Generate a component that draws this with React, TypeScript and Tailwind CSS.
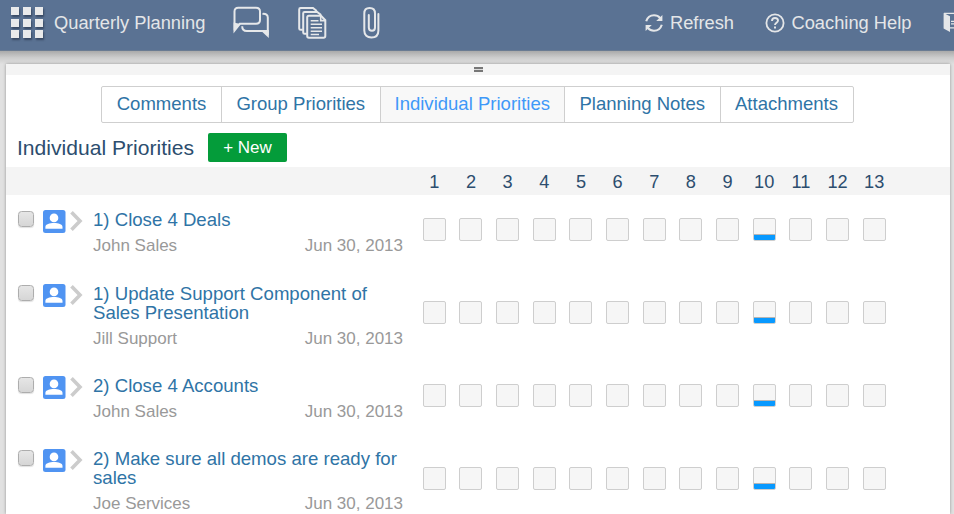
import React from "react";

type Priority = { title: string; owner: string; due: string };

const priorities: Priority[] = [
  { title: "1) Close 4 Deals", owner: "John Sales", due: "Jun 30, 2013" },
  { title: "1) Update Support Component of Sales Presentation", owner: "Jill Support", due: "Jun 30, 2013" },
  { title: "2) Close 4 Accounts", owner: "John Sales", due: "Jun 30, 2013" },
  { title: "2) Make sure all demos are ready for sales", owner: "Joe Services", due: "Jun 30, 2013" },
];

const weeks = Array.from({ length: 13 }, (_, i) => i + 1);
const currentWeek = 10;

const tabs = [
  { label: "Comments", width: "w-[120px]" },
  { label: "Group Priorities", width: "w-[158.5px]" },
  { label: "Individual Priorities", width: "w-[184.5px]" },
  { label: "Planning Notes", width: "w-[155.5px]" },
  { label: "Attachments", width: "w-[132px]" },
];
const activeTab = "Individual Priorities";

function AppGrid() {
  return (
    <div className="ml-[11px] grid w-[32px] grid-cols-3 gap-x-[4px] gap-y-[3.5px]">
      {Array.from({ length: 9 }, (_, i) => (
        <span key={i} className="h-[8px] bg-[#e9eaeb] shadow-[1px_2px_2px_rgba(30,40,60,0.55)]" />
      ))}
    </div>
  );
}

function ChatIcon() {
  return (
    <svg className="h-[34px] w-[38px]" viewBox="0 0 38 34" fill="none" stroke="#e6e8ea" strokeWidth="2">
      <path d="M1.5 25.5V6.5C1.5 4 2.8 2.8 5.2 2.8H23C25.6 2.8 27 4 27 6.5V15C27 17.5 25.6 18.8 23 18.8H6.8Z" />
      <path d="M.6 25.6V17.5L7.6 19Z" fill="#e6e8ea" stroke="none" />
      <path d="M29.5 8.9C33 8.6 34.8 9.8 34.8 12.6V30M35 26H13.8C11 26 9.2 24.8 9.2 21.2" />
      <path d="M35.8 33V25L28 25.8Z" fill="#e6e8ea" stroke="none" />
    </svg>
  );
}

function PagesIcon() {
  return (
    <svg className="h-[32px] w-[29px]" viewBox="0 0 29 32" fill="none" stroke="#e6e8ea" strokeWidth="2">
      <path d="M4.8 22.8H2.6Q1.2 22.8 1.2 21.4V2.4Q1.2 1 2.6 1H15L18.8 4" />
      <path d="M8.8 26.8H6.6Q5.2 26.8 5.2 25.4V6.3Q5.2 4.9 6.6 4.9H19.2L23.1 8" />
      <path d="M23 8.8H10.9Q9.2 8.8 9.2 10.5V29.1Q9.2 30.8 10.9 30.8H25.6Q27.3 30.8 27.3 29.1V13.2Z" />
      <path d="M22.7 9V13.6H27.3M12.7 13.8H20.5M12.7 17.3H24M12.7 20.8H24M12.7 24.3H24M12.7 27.5H21" strokeWidth="1.6" />
    </svg>
  );
}

function ClipIcon() {
  return (
    <svg className="h-[32px] w-[17px]" viewBox="0 0 17 32" fill="none" stroke="#e6e8ea" strokeWidth="2" strokeLinecap="round">
      <path d="M15.4 7V23.5C15.4 28.2 12.6 30.5 8.4 30.5S1.3 28.2 1.3 23.5V6.5C1.3 3 3.4 1.1 6.6 1.1S12 3 12 6.5V20.5C12 22.7 10.8 23.7 9 23.7S5.8 22.7 5.8 20.5V8" />
    </svg>
  );
}

function RefreshIcon() {
  return (
    <svg className="h-[18px] w-[18px]" viewBox="0 0 18 18" fill="none" stroke="#e4e6e8" strokeWidth="2.1">
      <path d="M1.2 7.3C2.5 3.2 5.6 1.3 9 1.3C11.5 1.3 13.5 2.1 15.2 4.1M16.8 10.7C15.5 14.8 12.4 16.7 9 16.7C6.5 16.7 4.5 15.9 2.8 13.9" />
      <path d="M17.4 1V7H11.2ZM.6 17V11H6.8Z" fill="#e4e6e8" stroke="none" />
    </svg>
  );
}

function HelpIcon() {
  return (
    <svg className="h-[20px] w-[20px]" viewBox="0 0 20 20" fill="none" stroke="#e4e6e8" strokeWidth="1.8">
      <circle cx="10" cy="10" r="8.6" />
      <path d="M7 7.9C7 6 8.2 5 10 5S13 6 13 7.6C13 9.8 10 9.8 10 12.1" strokeWidth="1.9" />
      <path d="M10 13.5V15.4" strokeWidth="2" />
    </svg>
  );
}

function DoorIcon() {
  return (
    <svg className="h-[20px] w-[20px] shrink-0" viewBox="0 0 20 20" fill="none" stroke="#e4e6e8" strokeWidth="1.3">
      <path d="M.6 1L7 4.2V20L.6 16.5Z" fill="#e4e6e8" stroke="none" />
      <path d="M1 1.3H13V5M7 15.8H13V12M8 9.3H14V7L18 10.5L14 14V11.8H8" />
    </svg>
  );
}

function PersonBadge() {
  return (
    <svg className="h-[23px] w-[23px]" viewBox="0 0 23 23">
      <rect width="22.5" height="23" rx="2.5" fill="#5094f2" />
      <ellipse cx="11" cy="7.9" rx="4.3" ry="4.4" fill="#fff" />
      <path d="M2.4 18.8V17C2.4 14.2 6.7 13.1 11 13.1S19.5 14.2 19.5 17V18.8Z" fill="#fff" />
    </svg>
  );
}

function Chevron() {
  return (
    <svg className="h-[20px] w-[13px]" viewBox="0 0 13 20" fill="none" stroke="#cccccc" strokeWidth="3.6">
      <path d="M1.5 1.3L10 10L1.5 18.7" />
    </svg>
  );
}

function WeekBox({ current }: { current: boolean }) {
  return (
    <div className="flex h-[23px] w-[23px] flex-col overflow-hidden rounded-[2px] border border-[#cecece] bg-[#f6f6f6]">
      {current && <div className="-mx-px -mb-px mt-auto h-[7px] border-t border-[#b5b5b5] bg-[#0899ff]" />}
    </div>
  );
}

function PriorityRow({ item }: { item: Priority }) {
  return (
    <div className="flex">
      <div className="flex w-[87px] shrink-0 items-start pt-[17px]">
        <span className="ml-[12px] mt-[1px] h-[16px] w-[16px] rounded-[3.5px] border-[1.5px] border-[#adadad] bg-linear-to-b from-[#e6e6e6] to-[#d6d6d6] shadow-[0_1px_1px_rgba(0,0,0,0.12)]" />
        <span className="ml-[9px]"><PersonBadge /></span>
        <span className="ml-[4px] mt-px"><Chevron /></span>
      </div>
      <div className="w-[310px] shrink-0 pb-[9.35px] pt-[17px]">
        <div className="-mr-[4px] text-[18.6px] leading-[19px] text-[#2f74a6]">{item.title}</div>
        <div className="mt-[5px] flex justify-between text-[17px] leading-[23px] text-[#999]">
          <span>{item.owner}</span>
          <span>{item.due}</span>
        </div>
      </div>
      <div className="ml-[13px] grid w-[476.5px] grid-cols-13 items-center justify-items-center">
        {weeks.map((w) => <WeekBox key={w} current={w === currentWeek} />)}
      </div>
    </div>
  );
}

export default function App() {
  return (
    <div className="flex h-[514px] w-[954px] flex-col overflow-hidden bg-[#e1e1e1] font-['Liberation_Sans',Arial,sans-serif]">
      <header className="flex h-[51px] shrink-0 items-start border-b border-[#6a7b92] bg-[#5a7293] text-[18.3px] leading-[22px] text-[#e4e6e8]">
        <div className="pt-[7px]"><AppGrid /></div>
        <span className="ml-[11px] w-[179px] pt-[12px]">Quarterly Planning</span>
        <div className="flex pt-[7px]">
          <div className="-mt-[2px]"><ChatIcon /></div>
          <div className="ml-[27px]"><PagesIcon /></div>
          <div className="ml-[36px]"><ClipIcon /></div>
        </div>
        <div className="ml-auto flex shrink-0">
          <div className="flex pt-[12px]">
            <span className="mt-[2px]"><RefreshIcon /></span>
            <span className="ml-[7px] w-[95px]">Refresh</span>
          </div>
          <div className="flex pt-[12px]">
            <span className="mt-[0.5px]"><HelpIcon /></span>
            <span className="ml-[6.5px] w-[151.5px]">Coaching Help</span>
          </div>
          <div className="w-[11px] overflow-hidden pt-[12px]"><DoorIcon /></div>
        </div>
      </header>
      <div className="h-[13px] shrink-0 bg-linear-to-b from-[#aaaaaa] via-[#cccccc] to-[#e0e0e0]" />
      <main className="ml-[6px] flex h-[450px] w-[944px] flex-col bg-white shadow-[0_0_3px_rgba(0,0,0,0.35)]">
        <div className="flex h-[11px] shrink-0 justify-center bg-[#f4f4f4]">
          <div className="mt-[3px] h-[5px] w-[9px] border-y-2 border-[#777] bg-[#ddd]" />
        </div>
        <nav className="ml-[95px] mt-[11px] flex h-[37px] w-[752.5px] shrink-0 rounded-[2px] border border-[#cfcfcf] text-[18.55px] text-[#2f74a6]">
          {tabs.map((t) => (
            <button
              key={t.label}
              className={`${t.width} shrink-0 whitespace-nowrap border-r border-[#cfcfcf] pb-px last:border-r-0 ${t.label === activeTab ? "bg-[#f8f8f8] text-[#3f99f8]" : ""}`}
            >
              {t.label}
            </button>
          ))}
        </nav>
        <div className="flex h-[44px] shrink-0 pl-[11px]">
          <h1 className="w-[191px] whitespace-nowrap pt-[12px] text-[21.1px] leading-[26px] text-[#2c4d6e]">Individual Priorities</h1>
          <button className="mt-[10px] h-[29px] w-[79px] rounded-[2px] bg-[#049c3a] text-[17px] text-white">+ New</button>
        </div>
        <div className="flex h-[28px] shrink-0 bg-[#f4f4f4] pl-[410px] text-[18.2px] leading-[30px] text-[#2c4d6e]">
          <div className="grid w-[476.5px] grid-cols-13 text-center">
            {weeks.map((w) => <span key={w}>{w}</span>)}
          </div>
        </div>
        <div className="-mt-[1.8px]">
          {priorities.map((p) => <PriorityRow key={p.title} item={p} />)}
        </div>
      </main>
    </div>
  );
}
